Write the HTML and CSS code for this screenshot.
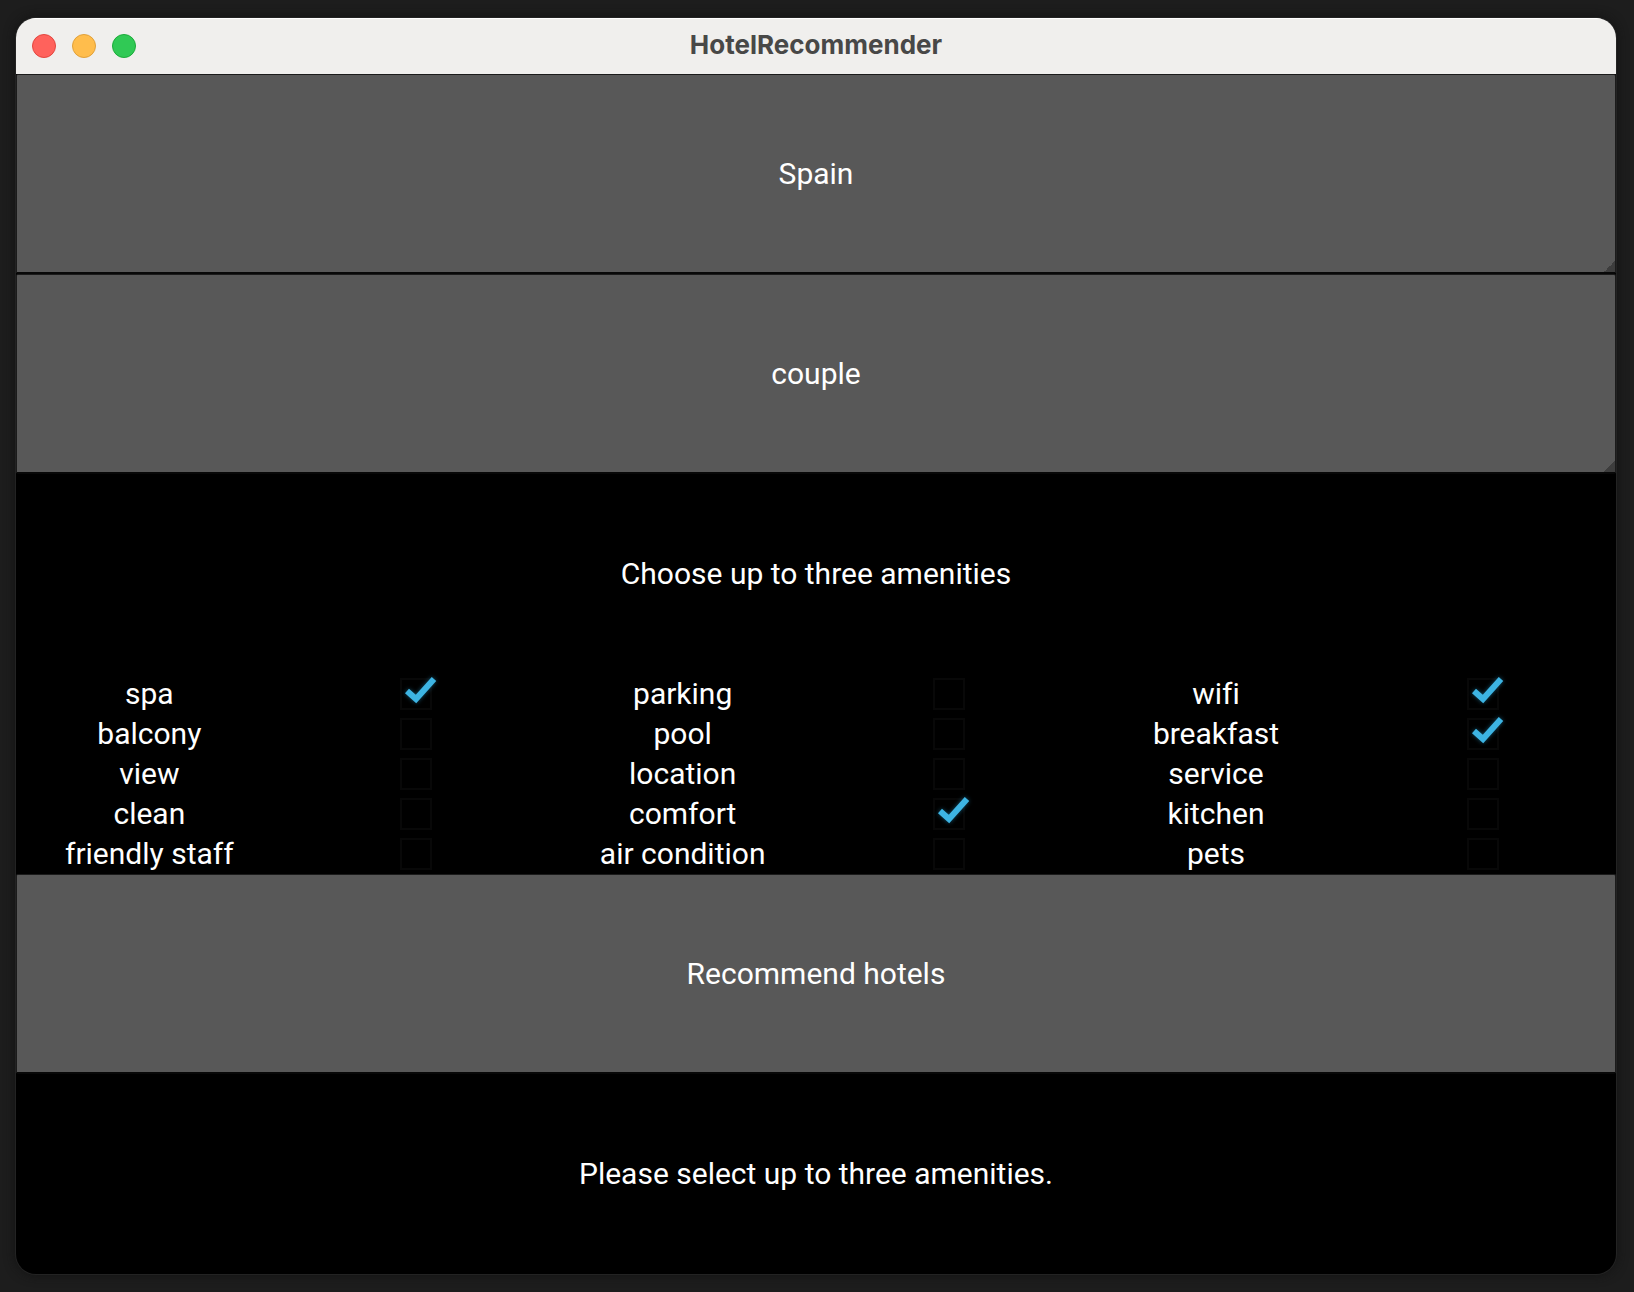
FILE: index.html
```html
<!DOCTYPE html>
<html lang="en">
<head>
<meta charset="utf-8">
<title>HotelRecommender</title>
<link rel="stylesheet" href="styles.css">
</head>
<body>
<div class="window">
  <header class="titlebar">
    <div class="controls">
      <button class="dot close" type="button" aria-label="Close"></button>
      <button class="dot minimize" type="button" aria-label="Minimize"></button>
      <button class="dot maximize" type="button" aria-label="Maximize"></button>
    </div>
    <h1 class="title">HotelRecommender</h1>
  </header>
  <main class="content">
    <select class="panel spinner" aria-label="Country"><option>Spain</option></select>
    <select class="panel spinner" aria-label="Travel group"><option>couple</option></select>
    <p class="message">Choose up to three amenities</p>
    <div class="amenities">
      <label class="name" for="spa">spa</label>
      <span class="choice"><input class="box" type="checkbox" id="spa" checked><svg class="tick" viewBox="0 0 40 40"><path d="M11 17l9 8L38 5"/></svg></span>
      <label class="name" for="parking">parking</label>
      <span class="choice"><input class="box" type="checkbox" id="parking"><svg class="tick" viewBox="0 0 40 40"><path d="M11 17l9 8L38 5"/></svg></span>
      <label class="name" for="wifi">wifi</label>
      <span class="choice"><input class="box" type="checkbox" id="wifi" checked><svg class="tick" viewBox="0 0 40 40"><path d="M11 17l9 8L38 5"/></svg></span>

      <label class="name" for="balcony">balcony</label>
      <span class="choice"><input class="box" type="checkbox" id="balcony"><svg class="tick" viewBox="0 0 40 40"><path d="M11 17l9 8L38 5"/></svg></span>
      <label class="name" for="pool">pool</label>
      <span class="choice"><input class="box" type="checkbox" id="pool"><svg class="tick" viewBox="0 0 40 40"><path d="M11 17l9 8L38 5"/></svg></span>
      <label class="name" for="breakfast">breakfast</label>
      <span class="choice"><input class="box" type="checkbox" id="breakfast" checked><svg class="tick" viewBox="0 0 40 40"><path d="M11 17l9 8L38 5"/></svg></span>

      <label class="name" for="view">view</label>
      <span class="choice"><input class="box" type="checkbox" id="view"><svg class="tick" viewBox="0 0 40 40"><path d="M11 17l9 8L38 5"/></svg></span>
      <label class="name" for="location">location</label>
      <span class="choice"><input class="box" type="checkbox" id="location"><svg class="tick" viewBox="0 0 40 40"><path d="M11 17l9 8L38 5"/></svg></span>
      <label class="name" for="service">service</label>
      <span class="choice"><input class="box" type="checkbox" id="service"><svg class="tick" viewBox="0 0 40 40"><path d="M11 17l9 8L38 5"/></svg></span>

      <label class="name" for="clean">clean</label>
      <span class="choice"><input class="box" type="checkbox" id="clean"><svg class="tick" viewBox="0 0 40 40"><path d="M11 17l9 8L38 5"/></svg></span>
      <label class="name" for="comfort">comfort</label>
      <span class="choice"><input class="box" type="checkbox" id="comfort" checked><svg class="tick" viewBox="0 0 40 40"><path d="M11 17l9 8L38 5"/></svg></span>
      <label class="name" for="kitchen">kitchen</label>
      <span class="choice"><input class="box" type="checkbox" id="kitchen"><svg class="tick" viewBox="0 0 40 40"><path d="M11 17l9 8L38 5"/></svg></span>

      <label class="name" for="staff">friendly staff</label>
      <span class="choice"><input class="box" type="checkbox" id="staff"><svg class="tick" viewBox="0 0 40 40"><path d="M11 17l9 8L38 5"/></svg></span>
      <label class="name" for="air">air condition</label>
      <span class="choice"><input class="box" type="checkbox" id="air"><svg class="tick" viewBox="0 0 40 40"><path d="M11 17l9 8L38 5"/></svg></span>
      <label class="name" for="pets">pets</label>
      <span class="choice"><input class="box" type="checkbox" id="pets"><svg class="tick" viewBox="0 0 40 40"><path d="M11 17l9 8L38 5"/></svg></span>
    </div>
    <button class="panel" type="button">Recommend hotels</button>
    <p class="message">Please select up to three amenities.</p>
  </main>
</div>
</body>
</html>
```
FILE: styles.css
```css
* {
  box-sizing: border-box;
}

body {
  margin: 0;
  min-height: 100vh;
  padding: 18px 18px 18px 16px;
  display: flex;
  background: #1d1d1d;
  color: #fff;
  font: 30px/40px Roboto, sans-serif;
  font-variant-ligatures: none;
}

.window {
  flex: 1;
  display: flex;
  flex-direction: column;
  border-radius: 20px;
  overflow: hidden;
  background: #000;
  box-shadow: 0 0 0 1px #232323, 0 0 12px #111;
}

.titlebar {
  display: grid;
  grid-template-columns: 1fr auto 1fr;
  align-items: center;
  height: 56px;
  padding: 0 16px;
  background: #f0efed;
  box-shadow: inset 0 1px #fff;
}

.controls {
  display: flex;
  gap: 16px;
}

.dot {
  width: 24px;
  height: 24px;
  padding: 0;
  border: 1px solid;
  border-radius: 50%;
}

.close {
  background: #ff625c;
  border-color: #e2463f;
}

.minimize {
  background: #ffbd4c;
  border-color: #e0a03a;
}

.maximize {
  background: #30c955;
  border-color: #1cab3a;
}

.title {
  margin: 0;
  color: #484847;
  font: 700 26px/54px Inter, sans-serif;
  height: 56px;
}

.content {
  flex: 1;
  display: grid;
  grid-template-rows: repeat(6, minmax(200px, 1fr));
}

.panel {
  appearance: none;
  width: 100%;
  margin: 0;
  padding: 0;
  border: 1px solid #1b1b1b;
  border-bottom: 2px solid #080808;
  border-radius: 2px;
  background: #585858;
  color: #fff;
  font: inherit;
  font-variant-ligatures: none;
  text-align: center;
}

.spinner {
  text-align-last: center;
  background: linear-gradient(135deg, #585858 50%, #3d3d3d 50%) right bottom / 11px 11px no-repeat padding-box, #585858;
}

.message {
  margin: 0;
  display: flex;
  align-items: center;
  justify-content: center;
}

.amenities {
  display: grid;
  grid-template-columns: repeat(6, 1fr);
  grid-auto-rows: 1fr;
  align-items: center;
}

.name {
  text-align: center;
}

.choice {
  position: relative;
  justify-self: center;
  display: grid;
  place-items: center;
  width: 40px;
  height: 40px;
}

.box {
  appearance: none;
  width: 32px;
  height: 32px;
  margin: 0;
  border: 2px solid #080808;
}

.tick {
  display: none;
  position: absolute;
  inset: 0;
  overflow: visible;
  pointer-events: none;
  fill: none;
  stroke: #3db4e3;
  stroke-width: 6;
  filter: drop-shadow(0 0 2px #12506a);
}

.box:checked + .tick {
  display: block;
}
```
